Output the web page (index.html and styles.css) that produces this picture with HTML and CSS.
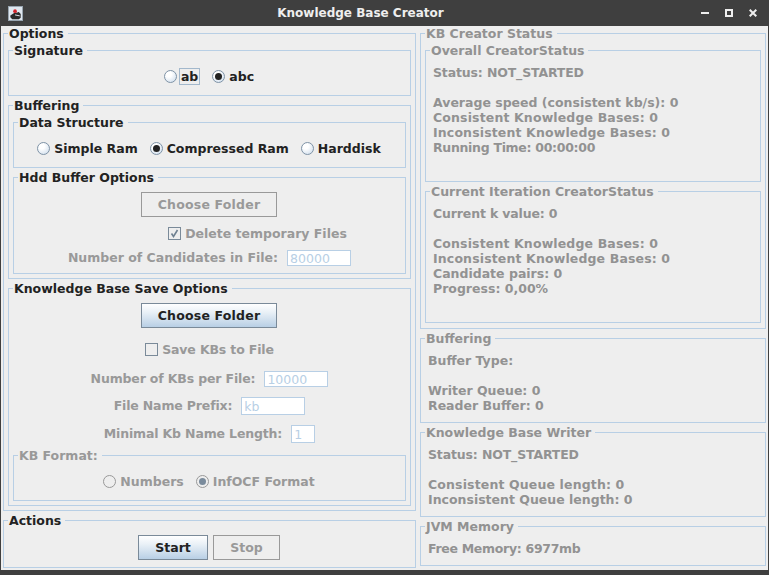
FILE: index.html
```html
<!DOCTYPE html>
<html lang="en">
<head>
<meta charset="utf-8">
<title>Knowledge Base Creator</title>
<link rel="stylesheet" href="styles.css">
</head>
<body>
<div class="window">
  <header class="titlebar">
    <svg class="app-icon" width="15" height="15" viewBox="0 0 16 16"><rect x="0.5" y="0.5" width="15" height="15" fill="#dfe7ef" stroke="#9aa6b2"/><path d="M2.5 10l4-2.5 5-1 2 2v4l-2 1.500h-7l-2-2z" fill="#2a2a2a"/><path d="M9.500 3v4M7.500 9.500l5 1" stroke="#e8edf2" stroke-width="1"/><circle cx="7.500" cy="5.500" r="2" fill="#d3242b"/></svg>
    <span class="title">Knowledge Base Creator</span>
    <div class="win-btns">
      <svg width="8" height="8" viewBox="0 0 8 8"><rect x="0" y="3" width="8" height="2" fill="#eeeeee"/></svg>
      <svg width="8" height="8" viewBox="0 0 8 8"><path d="M0 0h8v8H0zM2 2v4h4V2z" fill="#eeeeee" fill-rule="evenodd"/></svg>
      <svg width="8" height="8" viewBox="0 0 8 8"><path d="M.7.7l6.600 6.600M7.300.7L.7 7.300" stroke="#eeeeee" stroke-width="2"/></svg>
    </div>
  </header>
  <main class="content">
    <div class="col col-left">
      <fieldset class="box h-options"><legend>Options</legend>
        <fieldset class="box h-row"><legend>Signature</legend>
          <div class="radios radios-sig">
            <label class="radio"><i class="rb"></i><span class="focus">ab</span></label>
            <label class="radio"><i class="rb on"></i><span>abc</span></label>
          </div>
        </fieldset>
        <fieldset class="box h-buffering"><legend>Buffering</legend>
          <fieldset class="box h-row"><legend>Data Structure</legend>
            <div class="radios">
              <label class="radio"><i class="rb"></i><span>Simple Ram</span></label>
              <label class="radio"><i class="rb on"></i><span>Compressed Ram</span></label>
              <label class="radio"><i class="rb"></i><span>Harddisk</span></label>
            </div>
          </fieldset>
          <fieldset class="box h-hdd"><legend>Hdd Buffer Options</legend>
            <div class="stack">
              <button class="btn btn-folder" disabled>Choose Folder</button>
              <label class="check dim offset-check gap-s"><i class="cb"><svg width="9" height="9" viewBox="0 0 9 9"><path d="M1.500 4.500l2 3 4-6.500" fill="none" stroke="#6f8191" stroke-width="1.600"/></svg></i>Delete temporary Files</label>
              <div class="field dim gap-s"><span>Number of Candidates in File:</span><span class="input w64">80000</span></div>
            </div>
          </fieldset>
        </fieldset>
        <fieldset class="box h-save"><legend>Knowledge Base Save Options</legend>
          <div class="stack">
            <button class="btn btn-folder active">Choose Folder</button>
            <label class="check dim gap-l tight"><i class="cb"></i>Save KBs to File</label>
            <div class="field dim gap-l"><span class="tight">Number of KBs per File:</span><span class="input w64">10000</span></div>
            <div class="field dim gap-s"><span class="tight">File Name Prefix:</span><span class="input w64 tall">kb</span></div>
            <div class="field dim gap-s"><span class="tight">Minimal Kb Name Length:</span><span class="input w24 tall">1</span></div>
          </div>
          <fieldset class="box h-row format"><legend class="dim">KB Format:</legend>
            <div class="radios dim">
              <label class="radio"><i class="rb off"></i><span>Numbers</span></label>
              <label class="radio"><i class="rb off on"></i><span>InfOCF Format</span></label>
            </div>
          </fieldset>
        </fieldset>
      </fieldset>
      <fieldset class="box h-actions"><legend>Actions</legend>
        <div class="actions">
          <button class="btn btn-start active">Start</button>
          <button class="btn btn-stop" disabled>Stop</button>
        </div>
      </fieldset>
    </div>
    <div class="col col-right">
      <fieldset class="box grey h-status"><legend>KB Creator Status</legend>
        <fieldset class="box grey h-iter"><legend>Overall CreatorStatus</legend>
          <div class="lines">
            <p class="tight">Status: NOT_STARTED</p><p>&nbsp;</p>
            <p>Average speed (consistent kb/s): 0</p>
            <p class="wide">Consistent Knowledge Bases: 0</p>
            <p class="wide">Inconsistent Knowledge Bases: 0</p>
            <p class="tighter">Running Time: 00:00:00</p>
          </div>
        </fieldset>
        <fieldset class="box grey h-iter"><legend>Current Iteration CreatorStatus</legend>
          <div class="lines">
            <p class="tight">Current k value: 0</p><p>&nbsp;</p>
            <p class="wide">Consistent Knowledge Bases: 0</p>
            <p class="wide">Inconsistent Knowledge Bases: 0</p>
            <p>Candidate pairs: 0</p>
            <p>Progress: 0,00%</p>
          </div>
        </fieldset>
      </fieldset>
      <fieldset class="box grey h-info"><legend>Buffering</legend>
        <div class="lines">
          <p>Buffer Type:</p><p>&nbsp;</p>
          <p>Writer Queue: 0</p>
          <p>Reader Buffer: 0</p>
        </div>
      </fieldset>
      <fieldset class="box grey h-info"><legend>Knowledge Base Writer</legend>
        <div class="lines">
          <p class="tight">Status: NOT_STARTED</p><p>&nbsp;</p>
          <p class="wide">Consistent Queue length: 0</p>
          <p>Inconsistent Queue length: 0</p>
        </div>
      </fieldset>
      <fieldset class="box grey h-jvm"><legend>JVM Memory</legend>
        <div class="lines"><p class="tighter">Free Memory: 6977mb</p></div>
      </fieldset>
    </div>
  </main>
</div>
</body>
</html>
```
FILE: styles.css
```css
* { box-sizing: border-box; }
html, body { margin: 0; padding: 0; height: 100%; }
body { background: #3f3f3f; overflow: hidden; }

.window {
  width: 769px;
  height: 575px;
  display: flex;
  flex-direction: column;
  font: bold 12.5px/15px "DejaVu Sans", sans-serif;
  color: #222;
}

.titlebar {
  flex: none;
  height: 26px;
  display: flex;
  align-items: center;
  padding: 0 12px 0 8px;
  background: #3f3f3f;
}
.title { flex: 1; padding-right: 3px; text-align: center; color: #eeeeee; font-size: 12px; }
.win-btns { display: flex; gap: 16px; }
.win-btns svg { display: block; }

.content {
  flex: none;
  height: 544px;
  margin: 0 1px;
  padding-left: 2px;
  display: flex;
  gap: 4px;
  background: #eeeeee;
}
.col { display: flex; flex-direction: column; gap: 2px; }
.col-left { width: 413px; }
.col-right { width: 346px; }

fieldset.box {
  margin: 0;
  min-width: 0;
  padding: 2px 4px 4px;
  border: 1px solid #b8cfe5;
}
fieldset.box > legend { padding: 0 4px 0 1px; height: 15px; line-height: 15px; }
fieldset.box > fieldset.box { margin-top: 2px; }
fieldset.box > fieldset.box:first-of-type { margin-top: 0; }
.format.box { margin-top: 5px !important; }

.h-options { height: 485px; }
.h-row { height: 53px; }
.h-buffering { height: 181px; }
.h-hdd { height: 104px; }
.h-save { height: 225px; }
.h-actions { height: 55px; }
.h-status { height: 303px; }
.h-iter { height: 139px; }
.h-info { height: 92px; }
.h-jvm { height: 47px; }

.grey, .grey > legend { color: #929292; }
.dim, fieldset.box > legend.dim { color: #999999; }

.tight { letter-spacing: -0.15px; }
.tighter { letter-spacing: -0.3px; }
.wide { letter-spacing: 0.14px; }

.lines { padding: 5px 0 0 3px; }
.lines p { margin: 0; height: 15px; white-space: nowrap; }

.radios { display: flex; justify-content: center; gap: 10px; height: 17px; margin-top: 8px; padding-left: 1px; }
.radios-sig { gap: 12px; }
.radio { display: flex; align-items: center; gap: 2px; }
.radio span { padding: 0 1px; border: 1px solid transparent; height: 17px; line-height: 15px; }
.radio span.focus { border-color: #a3b8cc; }

.rb {
  width: 13px;
  height: 13px;
  flex: none;
  border-radius: 50%;
  border: 1px solid #7f93a6;
  background: radial-gradient(circle at 35% 30%, #ffffff 25%, #c9d9ea 100%);
  display: flex;
  align-items: center;
  justify-content: center;
}
.rb.on::after { content: ""; width: 7px; height: 7px; border-radius: 50%; background: #222; }
.rb.off { border-color: #999999; background: #eeeeee; }
.rb.off.on::after { background: #7a8b9c; }

.stack { display: flex; flex-direction: column; align-items: center; padding-top: 5px; }
.gap-s { margin-top: 10px; }
.gap-l { margin-top: 15px; }
.offset-check { margin-left: 96px; }

.btn {
  font: inherit;
  color: #222;
  height: 25px;
  padding: 0;
  border: 1px solid #7a8a99;
  border-radius: 0;
  background: linear-gradient(#ffffff 0%, #eaf1f7 35%, #b8cfe5 100%);
}
.btn[disabled] { background: #eeeeee; border-color: #999999; color: #999999; }
.btn-folder { width: 136px; margin-right: 1px; letter-spacing: 0.2px; }
.btn-start { width: 70px; }
.btn-stop { width: 67px; }

.check { display: flex; align-items: center; gap: 4px; height: 13px; white-space: nowrap; }
.cb {
  width: 13px;
  height: 13px;
  flex: none;
  border: 1px solid #7a8a99;
  display: flex;
  align-items: center;
  justify-content: center;
}
.cb svg { display: block; }

.field { display: flex; align-items: center; gap: 9px; white-space: nowrap; }
.field > span:first-child { padding-bottom: 1px; }
.input {
  height: 16px;
  padding-left: 2px;
  display: block;
  background: #ffffff;
  border: 1px solid #b8cfe5;
  color: #b8cfe5;
  font-weight: normal;
  line-height: 15px;
  overflow: hidden;
}
.w64 { width: 64px; }
.w24 { width: 24px; }
.tall { height: 18px; line-height: 17px; }

.actions { display: flex; justify-content: center; gap: 5px; padding: 5px 1px 0 0; }
```
